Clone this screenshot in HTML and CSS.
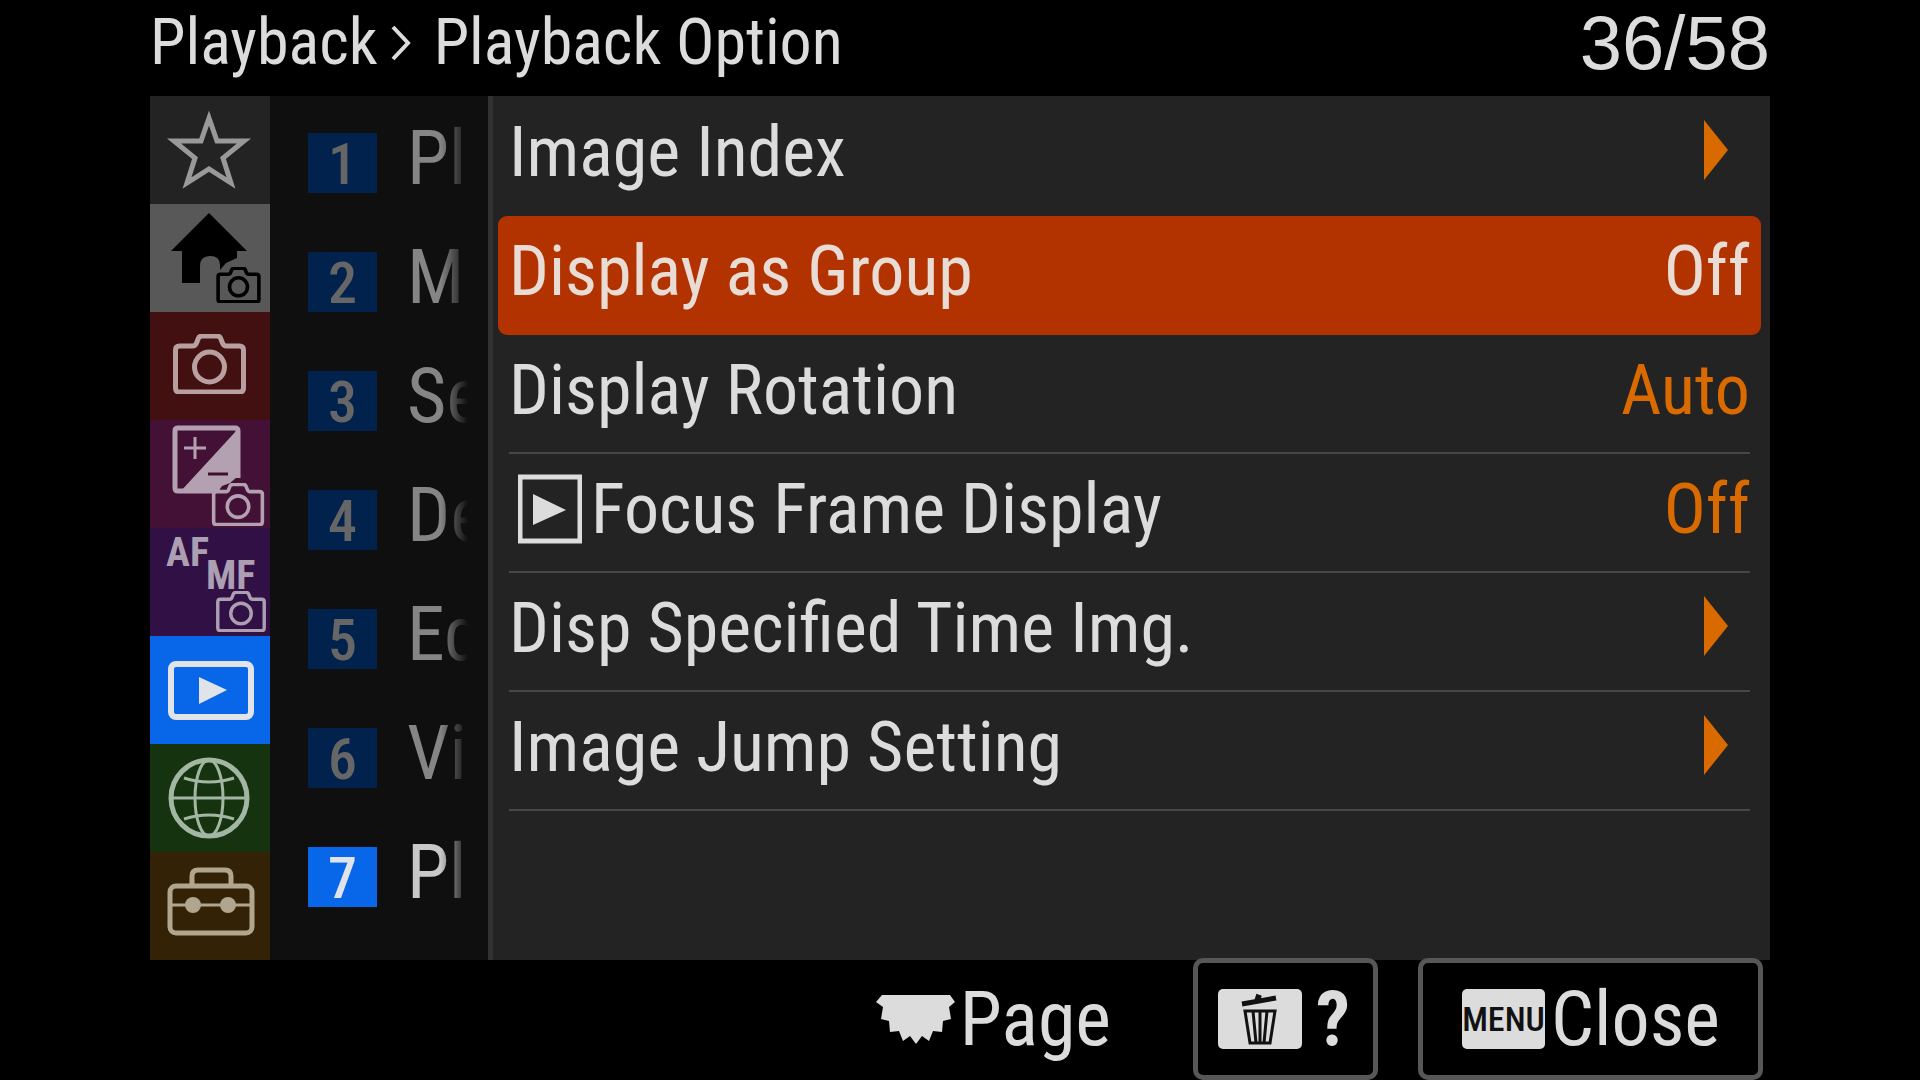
FILE: index.html
```html
<!DOCTYPE html>
<html lang="en">
<head>
  <meta charset="UTF-8">
  <meta name="viewport" content="width=device-width, initial-scale=1.0">
  <title>Playback Option</title>
  <link rel="stylesheet" href="styles.css">
</head>
<body>
  <!-- shared camera outline -->
  <svg class="defs" aria-hidden="true">
    <symbol id="camera" viewBox="0 0 72 60">
      <path d="M6 12H19Q22 12 23 9L25 4Q26 2 29 2H43Q46 2 47 4L49 9Q50 12 53 12H66Q70 12 70 16V54Q70 58 66 58H6Q2 58 2 54V16Q2 12 6 12Z"/>
      <circle cx="36" cy="33" r="15"/>
    </symbol>
  </svg>

  <header class="header">
    <h1 class="title"><span>Playback</span><svg class="chevron" viewBox="0 0 22 36"><path d="M3 2L18 18L3 34"/></svg><span>Playback Option</span></h1>
    <span class="counter">36/58</span>
  </header>

  <main class="menu">
    <nav class="tabs" aria-label="Menu tabs">
      <button class="tab tab-star" aria-label="My Menu">
        <svg viewBox="0 0 120 108"><path class="line" d="M59 22L67 45H94L73 62L81 87L59 73L37 87L45 62L24 45H51Z"/></svg>
      </button>
      <button class="tab tab-home" aria-label="Main">
        <svg viewBox="0 0 120 108">
          <path d="M59 9L97 47H87V54L76 59L70 66V61Q70 52 60 52Q50 52 50 62V79H32V47H21Z"/>
          <use class="dark" href="#camera" x="66" y="63" width="45" height="36"/>
        </svg>
      </button>
      <button class="tab tab-shoot" aria-label="Shooting">
        <svg viewBox="0 0 120 108"><use class="line" href="#camera" x="23" y="22" width="73" height="60"/></svg>
      </button>
      <button class="tab tab-exposure" aria-label="Exposure/Color">
        <svg viewBox="0 0 120 108">
          <path class="solid" d="M87 10V57L80 63L72 66L68 72H30Z"/>
          <path class="line" d="M66 71H28Q25 71 25 68V11Q25 8 28 8H85Q88 8 88 11V58"/>
          <path class="thin" d="M34 28H56M45 17V39"/>
          <path class="minus" d="M58 54H78"/>
          <use class="small" href="#camera" x="61" y="63" width="54" height="43"/>
        </svg>
      </button>
      <button class="tab tab-focus" aria-label="Focus">
        <svg viewBox="0 0 120 108">
          <text x="16" y="38">AF</text>
          <text x="56" y="61">MF</text>
          <use class="small" href="#camera" x="66" y="63" width="50" height="41"/>
        </svg>
      </button>
      <button class="tab tab-play" aria-label="Playback" aria-current="true">
        <svg viewBox="0 0 120 108">
          <rect class="frame" x="21" y="28" width="80" height="53" rx="5"/>
          <path class="solid" d="M49 41L77 54L49 68Z"/>
        </svg>
      </button>
      <button class="tab tab-network" aria-label="Network">
        <svg viewBox="0 0 120 108">
          <circle class="line" cx="59" cy="54" r="38"/>
          <path class="thin" d="M21 54H97M34 34Q59 42 84 34M34 75Q59 67 84 75"/>
          <ellipse class="thin" cx="59" cy="54" rx="14" ry="38"/>
        </svg>
      </button>
      <button class="tab tab-setup" aria-label="Setup">
        <svg viewBox="0 0 120 108">
          <rect class="line" x="20" y="34" width="82" height="47" rx="6"/>
          <path class="line" d="M42 34V24Q42 18 48 18H75Q81 18 81 24V34"/>
          <path class="thin" d="M20 53H102"/>
          <circle class="solid" cx="43" cy="53" r="8"/>
          <circle class="solid" cx="78" cy="53" r="8"/>
        </svg>
      </button>
    </nav>

    <nav class="groups" aria-label="Groups">
      <button class="group"><span class="number">1</span><span class="name">Pl</span></button>
      <button class="group"><span class="number">2</span><span class="name">M</span></button>
      <button class="group"><span class="number">3</span><span class="name">Se</span></button>
      <button class="group"><span class="number">4</span><span class="name">De</span></button>
      <button class="group"><span class="number">5</span><span class="name">Ed</span></button>
      <button class="group"><span class="number">6</span><span class="name">Vi</span></button>
      <button class="group current" aria-current="true"><span class="number">7</span><span class="name">Pl</span></button>
    </nav>

    <section class="items">
      <button class="item plain">
        <span>Image Index</span>
        <svg class="arrow" viewBox="0 0 24 60"><path d="M0 0L24 30L0 60Z"/></svg>
      </button>
      <button class="item selected">
        <span>Display as Group</span>
        <span class="value">Off</span>
      </button>
      <button class="item">
        <span>Display Rotation</span>
        <span class="value">Auto</span>
      </button>
      <button class="item">
        <span class="with-icon">
          <svg class="play-icon" viewBox="0 0 64 70"><rect x="2" y="3" width="60" height="64"/><path d="M15 20L48 36L15 51Z"/></svg>
          <span>Focus Frame Display</span>
        </span>
        <span class="value">Off</span>
      </button>
      <button class="item">
        <span>Disp Specified Time Img.</span>
        <svg class="arrow" viewBox="0 0 24 60"><path d="M0 0L24 30L0 60Z"/></svg>
      </button>
      <button class="item">
        <span>Image Jump Setting</span>
        <svg class="arrow" viewBox="0 0 24 60"><path d="M0 0L24 30L0 60Z"/></svg>
      </button>
    </section>
  </main>

  <footer class="footer">
    <div class="page-hint">
      <svg class="dial" viewBox="0 0 80 50"><path d="M6 1H74L79 8L73 13L75 25L67 27L66 38L57 37L53 47L46 42L40 50L34 42L27 47L23 37L14 38L13 27L5 25L7 13L0 8Z"/></svg>
      <span>Page</span>
    </div>
    <button class="key help">
      <svg class="cap" viewBox="0 0 84 60">
        <rect class="plate" width="84" height="60" rx="5"/>
        <path class="lid" d="M24 15L58 9M39 11L40 8L43 9"/>
        <path class="bin" d="M27 22H57L52 54H32ZM35 22L38 54M42 22V54M49 22L46 54"/>
      </svg>
      <span class="question">?</span>
    </button>
    <button class="key close">
      <span class="menu-cap">MENU</span>
      <span>Close</span>
    </button>
  </footer>
</body>
</html>
```
FILE: styles.css
```css
:root {
  --text: #dcdcdc;
  --accent: #d96a00;
  --blue: #0866e8;
  --panel: #232323;
}
* {
  box-sizing: border-box;
}
body {
  margin: 0;
  padding: 0 150px;
  min-height: 100vh;
  display: flex;
  flex-direction: column;
  background: #000;
  color: var(--text);
  font-family: "Roboto Condensed", "Liberation Sans Narrow", "Liberation Sans", sans-serif;
  font-size: 76px;
  line-height: 80px;
}
button {
  margin: 0;
  padding: 0;
  border: none;
  background: none;
  color: inherit;
  font: inherit;
  text-align: left;
  cursor: pointer;
}
svg {
  display: block;
  flex: none;
}
.defs {
  position: absolute;
  width: 0;
  height: 0;
}

/* top line */
.header {
  height: 96px;
  display: flex;
  justify-content: space-between;
  align-items: center;
  padding-bottom: 10px;
}
.title {
  margin: 0;
  display: flex;
  align-items: center;
  font-size: 64px;
  font-weight: 400;
}
.chevron {
  width: 22px;
  height: 36px;
  margin: 0 22px 0 12px;
  fill: none;
  stroke: var(--text);
  stroke-width: 4;
}
.counter {
  font-family: "Liberation Sans", sans-serif;
  font-size: 76px;
}

.menu {
  flex: 1;
  display: flex;
  background: #0f0f0f;
}

/* colored tabs on the left */
.tabs {
  width: 120px;
  display: flex;
  flex-direction: column;
}
.tab {
  flex: 1;
  color: #999;
}
.tab svg {
  width: 120px;
  height: 108px;
}
.line,
.thin,
.small,
.dark,
.frame {
  fill: none;
  stroke: currentColor;
  stroke-width: 5;
}
.thin {
  stroke-width: 3;
}
.dark {
  stroke: #000;
  stroke-width: 6;
}
.frame {
  stroke-width: 6;
}
.solid {
  fill: currentColor;
}
.minus {
  stroke: #3f1030;
  stroke-width: 3;
}
.tab text {
  fill: currentColor;
  font-size: 40px;
  font-weight: 700;
}
.tab-star { background: #232323; }
.tab-home { background: #585858; }
.tab-shoot { background: #421010; color: #b9a0a0; }
.tab-exposure { background: #431036; color: #b3a0b0; }
.tab-focus { background: #301045; color: #ac9fb2; }
.tab-play { background: var(--blue); color: #e0e4ea; }
.tab-network { background: #15330f; color: #a3b5a3; }
.tab-setup { background: #332205; color: #b0a58e; }

/* numbered groups */
.groups {
  width: 218px;
  padding-top: 4px;
  display: flex;
  flex-direction: column;
}
.group {
  height: 119px;
  padding: 0 20px 0 38px;
  display: flex;
  align-items: center;
  color: #858585;
}
.number {
  flex: none;
  width: 69px;
  height: 60px;
  margin: 7px 30px 0 0;
  background: #00224c;
  color: #666;
  font-size: 58px;
  font-weight: 500;
  line-height: 62px;
  text-align: center;
}
.name {
  flex: 1;
  overflow: hidden;
  padding-bottom: 4px;
  white-space: nowrap;
  -webkit-mask-image: linear-gradient(to right, #000 55%, transparent);
  mask-image: linear-gradient(to right, #000 55%, transparent);
}
.current {
  color: #c8c8c8;
}
.current .number {
  background: var(--blue);
  color: #e0e4ea;
}

/* settings list */
.items {
  flex: 1;
  padding: 1px 9px 0 5px;
  border-left: 5px solid #323232;
  background: var(--panel);
}
.item {
  width: 100%;
  height: 119px;
  padding: 0 11px 10px;
  display: flex;
  justify-content: space-between;
  align-items: center;
  font-size: 70px;
  white-space: nowrap;
  background: linear-gradient(#474747, #474747) center bottom / calc(100% - 22px) 2px no-repeat;
}
.item.plain {
  background: none;
}
.item.selected {
  background: #b23200;
  border-radius: 9px;
}
.value {
  color: var(--accent);
}
.selected,
.selected .value {
  color: #e8dcd4;
}
.arrow {
  width: 24px;
  height: 60px;
  margin: 0 22px 4px 0;
  fill: var(--accent);
}
.with-icon {
  display: flex;
  align-items: center;
  gap: 9px;
  padding-left: 9px;
}
.play-icon {
  width: 64px;
  height: 70px;
  fill: var(--text);
}
.play-icon rect {
  fill: none;
  stroke: var(--text);
  stroke-width: 5;
}

/* key hints */
.footer {
  display: flex;
  justify-content: flex-end;
  align-items: center;
  margin-top: -2px;
  padding-right: 7px;
}
.page-hint {
  display: flex;
  align-items: center;
  gap: 4px;
  margin-right: 82px;
}
.dial {
  width: 80px;
  height: 50px;
  fill: var(--text);
}
.key {
  height: 122px;
  display: flex;
  align-items: center;
  border: 5px solid #575757;
  border-radius: 10px;
  background: #000;
}
.help {
  width: 185px;
  margin-right: 40px;
  padding-left: 20px;
  gap: 14px;
}
.close {
  width: 345px;
  padding-left: 39px;
  gap: 6px;
}
.cap {
  width: 84px;
  height: 60px;
}
.plate {
  fill: var(--text);
}
.lid {
  fill: none;
  stroke: #111;
  stroke-width: 5;
}
.bin {
  fill: none;
  stroke: #111;
  stroke-width: 3;
}
.question {
  font-weight: 700;
}
.menu-cap {
  width: 83px;
  height: 60px;
  border-radius: 5px;
  background: var(--text);
  color: #111;
  font-size: 34px;
  font-weight: 500;
  line-height: 60px;
  text-align: center;
}
```
